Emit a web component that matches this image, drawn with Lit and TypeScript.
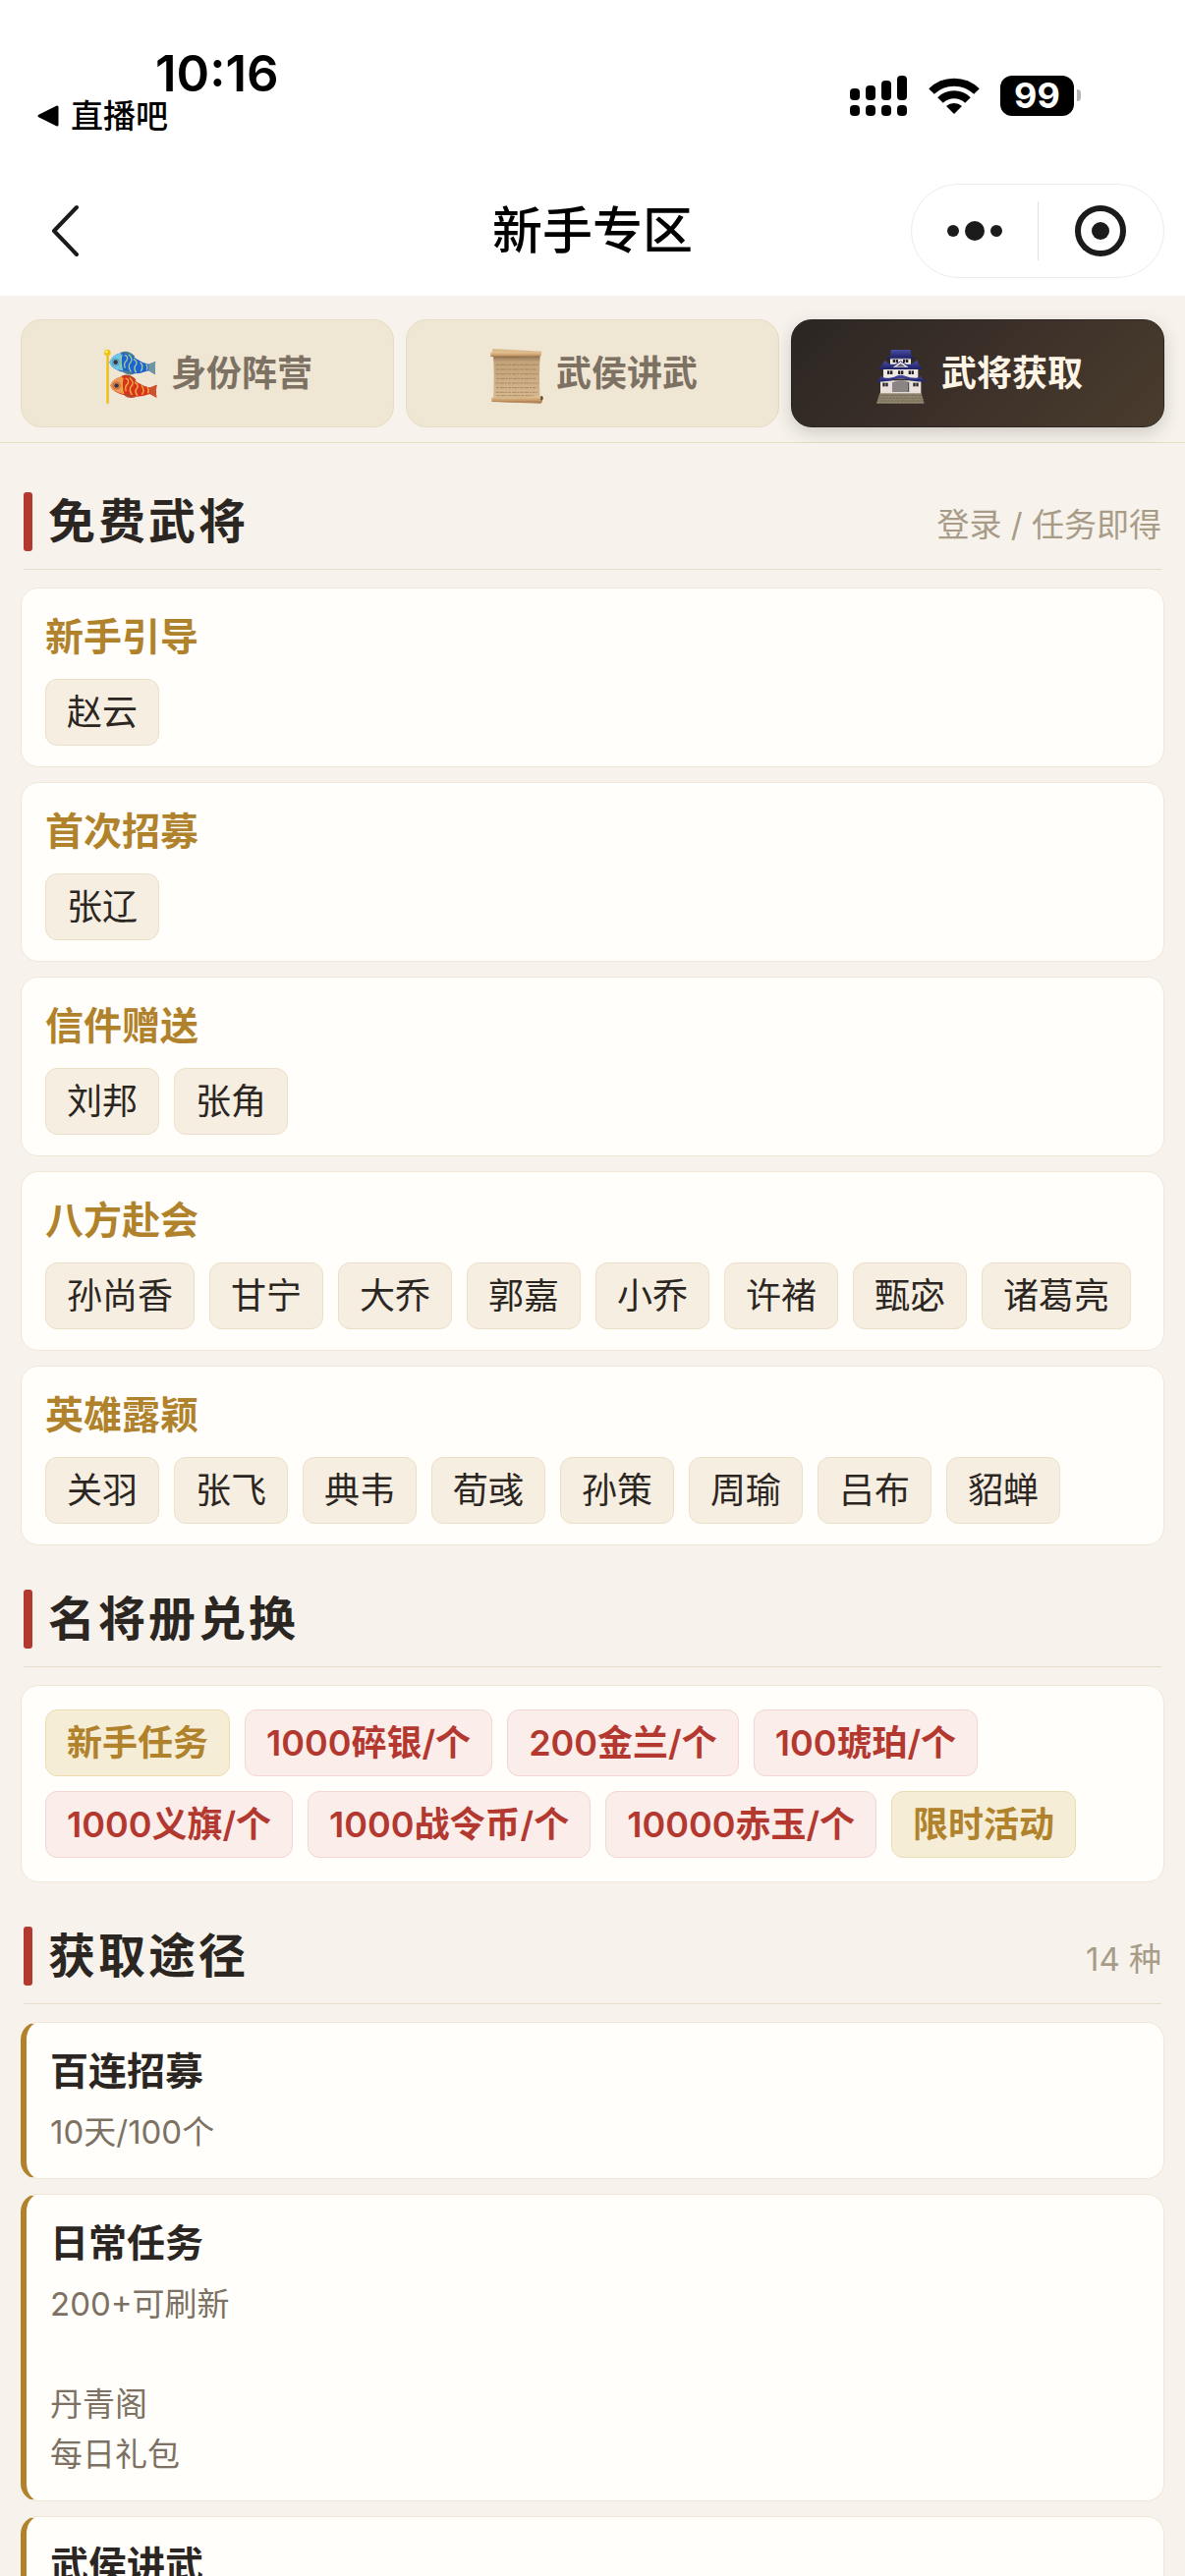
import { LitElement, html, svg, css, nothing } from "lit";
import { customElement, property, state } from "lit/decorators.js";
import { classMap } from "lit/directives/class-map.js";

type TagKind = "plain" | "red" | "gold";
interface Tag { label: string; kind: TagKind }
interface Group { title: string; heroes: string[] }
interface Source { title: string; lines: string[] }

const GROUPS: Group[] = [
  { title: "新手引导", heroes: ["赵云"] },
  { title: "首次招募", heroes: ["张辽"] },
  { title: "信件赠送", heroes: ["刘邦", "张角"] },
  { title: "八方赴会", heroes: ["孙尚香", "甘宁", "大乔", "郭嘉", "小乔", "许褚", "甄宓", "诸葛亮"] },
  { title: "英雄露颖", heroes: ["关羽", "张飞", "典韦", "荀彧", "孙策", "周瑜", "吕布", "貂蝉"] },
];

const EXCHANGES: Tag[] = [
  { label: "新手任务", kind: "gold" },
  { label: "1000碎银/个", kind: "red" },
  { label: "200金兰/个", kind: "red" },
  { label: "100琥珀/个", kind: "red" },
  { label: "1000义旗/个", kind: "red" },
  { label: "1000战令币/个", kind: "red" },
  { label: "10000赤玉/个", kind: "red" },
  { label: "限时活动", kind: "gold" },
];

const SOURCES: Source[] = [
  { title: "百连招募", lines: ["10天/100个"] },
  { title: "日常任务", lines: ["200+可刷新", "", "丹青阁", "每日礼包"] },
  { title: "武侯讲武", lines: [] },
];

const fish = (body: string, scale: string, head: string, fin: string, tail: string) => svg`
  <path d="M98 56 Q122 46 142 68 L134 74 L98 62Z" fill=${fin}/>
  <path d="M64 86 Q74 62 100 58 Q124 56 146 76 Q164 88 184 92 L205 84 Q201 98 204 124 L184 112 Q160 122 132 121 Q88 116 70 98Z" fill=${body}/>
  <path d="M64 86 Q74 62 100 58 Q96 84 102 112 Q82 108 70 98Z" fill=${head}/>
  <path d="M184 92 L205 84 Q201 98 204 124 L184 112Z" fill=${tail}/>
  <g fill="none" stroke=${scale} stroke-width="4">
    <path d="M102 62 Q96 86 104 112"/>
    <path d="M110 64 Q124 68 116 82 Q106 90 112 104"/>
    <path d="M122 62 Q140 76 126 90 Q120 100 130 116"/>
    <path d="M138 76 Q154 86 142 98 Q138 108 146 118"/>
    <path d="M158 86 Q170 98 160 114"/>
    <path d="M176 92 Q182 100 178 110"/>
  </g>
  <circle cx="83" cy="86" r="11" fill=${head} stroke=${fin} stroke-width="2"/>
  <circle cx="83" cy="86" r="7" fill="#3b3440"/>
  <path d="M108 112 Q122 110 140 122 Q122 128 108 118Z" fill=${fin}/>`;

const iconKoi = html`<svg class="emoji" viewBox="42 24 180 192" aria-hidden="true">
  <rect x="54" y="56" width="8" height="156" rx="3" fill="#e3b011"/>
  <rect x="55" y="60" width="3" height="150" fill="#fbe04e"/>
  <circle cx="58" cy="57" r="10" fill="#f0c411"/>
  <circle cx="55" cy="54" r="4" fill="#fff07a"/>
  ${fish("#1f62d3", "#9fcf8a", "#6cc7e6", "#4b7f8c", "#7395a0")}
  <g transform="translate(2 73) scale(1.01 .98)">${fish("#d8331c", "#f2b23c", "#ec9a55", "#b4442a", "#cf5230")}</g>
</svg>`;

const iconScroll = html`<svg class="emoji" viewBox="48 24 180 192" aria-hidden="true">
  <defs>
    <linearGradient id="paper" x1="0" y1="0" x2="0" y2="1">
      <stop offset="0" stop-color="#8d7150"/><stop offset=".14" stop-color="#c3a37a"/>
      <stop offset=".6" stop-color="#cfae87"/><stop offset="1" stop-color="#d8ba90"/>
    </linearGradient>
    <linearGradient id="roll" x1="0" y1="0" x2="0" y2="1">
      <stop offset="0" stop-color="#e7c596"/><stop offset=".6" stop-color="#c99c6b"/><stop offset="1" stop-color="#8a6340"/>
    </linearGradient>
  </defs>
  <path d="M66 66 H209 Q205 130 209 200 H66 Q70 130 66 66Z" fill="url(#paper)"/>
  <path d="M64 45 L214 53 L212 62 L62 58Z" fill="#dcb98a"/>
  <path d="M58 55 L212 58 V67 Q130 74 58 69Z" fill="url(#roll)"/>
  <g stroke="#8f7350" stroke-width="2" stroke-dasharray="9 3 14 2 6 3" fill="none">
    <path d="M74 94 H202"/><path d="M76 108 H200"/><path d="M74 122 H202"/><path d="M76 136 H198"/>
    <path d="M74 150 H202"/><path d="M75 164 H200"/><path d="M74 178 H202"/><path d="M76 188 H190"/>
  </g>
  <path d="M60 194 Q130 200 214 190 L216 206 L212 211 L62 206Z" fill="url(#roll)"/>
  <path d="M62 204 L212 208 V212 L62 207Z" fill="#b98a5c"/>
  <ellipse cx="214" cy="196" rx="4" ry="7" fill="#6e4c30"/>
</svg>`;

const iconCastle = html`<svg class="emoji" viewBox="24 24 180 192" aria-hidden="true">
  <defs>
    <linearGradient id="roof" x1="0" y1="0" x2="0" y2="1">
      <stop offset="0" stop-color="#4a4fa6"/><stop offset="1" stop-color="#1d1f66"/>
    </linearGradient>
  </defs>
  <path d="M46 180 H173 L182 212 H36Z" fill="#8b8069"/>
  <g stroke="#665d4c" stroke-width="2" stroke-dasharray="6 4 9 3" fill="none">
    <path d="M46 188 H176"/><path d="M43 196 H178"/><path d="M40 204 H180"/>
  </g>
  <g stroke="#aea288" stroke-width="2" stroke-dasharray="4 7" fill="none">
    <path d="M48 192 H176"/><path d="M43 200 H178"/><path d="M40 209 H180"/>
  </g>
  <rect x="48" y="142" width="124" height="39" fill="#e9e0da"/>
  <rect x="57" y="106" width="106" height="30" fill="#efe8e3"/>
  <rect x="78" y="72" width="63" height="24" fill="#f1ebe6"/>
  <path d="M80 48 H140 L142 66 Q148 71 151 74 H67 Q75 70 78 66Z" fill="url(#roof)"/>
  <path d="M67 74 H151 V76 H67Z" fill="#171a4e"/>
  <path d="M60 80 L77 92 H142 L160 80 Q164 96 179 107 Q172 109 168 108 H52 Q46 109 41 106 Q56 96 60 80Z" fill="url(#roof)"/>
  <path d="M110 84 L134 101 H86Z" fill="#efe8e3"/>
  <path d="M110 90 L124 100 H96Z" fill="#6a6580"/>
  <path d="M84 100 L110 83 L136 100" stroke="#2b2e78" stroke-width="3" fill="none"/>
  <path d="M50 128 Q56 134 66 134 Q86 134 96 128 Q110 122 124 128 Q136 134 156 134 Q164 134 171 128 Q176 140 190 144 Q180 147 160 145 Q140 144 126 138 Q110 132 94 138 Q80 144 60 145 Q42 147 32 144 Q46 140 50 128Z" fill="url(#roof)"/>
  <g fill="#26232b">
    <rect x="86" y="78" width="7" height="9"/><rect x="95" y="78" width="7" height="9"/>
    <rect x="117" y="78" width="7" height="9"/><rect x="126" y="78" width="7" height="9"/>
    <rect x="69" y="112" width="7" height="11"/><rect x="78" y="112" width="7" height="11"/>
    <rect x="102" y="112" width="7" height="11"/><rect x="111" y="112" width="7" height="11"/>
    <rect x="134" y="112" width="7" height="11"/><rect x="143" y="112" width="7" height="11"/>
    <rect x="55" y="149" width="7" height="11"/><rect x="64" y="149" width="7" height="11"/>
    <rect x="148" y="149" width="7" height="11"/><rect x="157" y="149" width="7" height="11"/>
  </g>
  <path d="M84 178 V148 Q110 138 136 148 V178Z" fill="#d9d0ca"/>
  <path d="M87 177 V147 M93 177 V145 M99 177 V144 M105 177 V143 M111 177 V143 M117 177 V143 M123 177 V144 M129 177 V145 M134 177 V147" stroke="#3d3840" stroke-width="3"/>
</svg>`;

const TABS = [
  { label: "身份阵营", icon: iconKoi },
  { label: "武侯讲武", icon: iconScroll },
  { label: "武将获取", icon: iconCastle },
];

@customElement("status-bar")
class StatusBar extends LitElement {
  static styles = css`
    :host { display: flex; justify-content: space-between; align-items: flex-start; height: 169px; color: #000; }
    .left { display: flex; flex-direction: column; align-items: flex-start; padding: 50px 0 0 36px; }
    .time { padding-left: 122px; font-size: 51px; line-height: 50px; font-weight: 600; }
    .return { display: flex; align-items: center; gap: 12px; font-size: 33px; line-height: 36px; font-weight: 500; color: inherit; text-decoration: none; }
    .right { display: flex; align-items: center; padding: 76px 106px 0 0; }
    .signal { width: 58px; height: 42px; margin-right: 22px; }
    .wifi { width: 52px; height: 40px; margin-right: 21px; }
    .battery { display: flex; align-items: center; justify-content: center; width: 75px; height: 41px; border-radius: 12px; background: #000; color: #fff; font-size: 36px; line-height: 41px; font-weight: 700; }
    .nub { width: 4px; height: 12px; margin-left: 3px; border-radius: 0 4px 4px 0; background: #b4b4b4; }
  `;
  render() {
    return html`
      <div class="left">
        <span class="time">10:16</span>
        <a class="return" href="#return">
          <svg width="24" height="24" viewBox="0 0 24 24" aria-hidden="true"><path d="M4 12 22 3V21Z" fill="#000" stroke="#000" stroke-width="3" stroke-linejoin="round"/></svg>
          直播吧
        </a>
      </div>
      <div class="right">
        <svg class="signal" viewBox="0 0 58 42" aria-hidden="true">
          <rect x="0" y="14" width="10" height="12" rx="4"/><rect x="16" y="11" width="10" height="15" rx="4"/>
          <rect x="32" y="6" width="10" height="20" rx="4"/><rect x="48" y="1" width="10" height="25" rx="4"/>
          <rect x="0" y="31" width="10" height="11" rx="4"/><rect x="16" y="31" width="10" height="11" rx="4"/>
          <rect x="32" y="31" width="10" height="11" rx="4"/><rect x="48" y="31" width="10" height="11" rx="4"/>
        </svg>
        <svg class="wifi" viewBox="0 0 52 40" aria-hidden="true">
          <g fill="none" stroke="#000" stroke-width="8"><path d="M3 16A33 33 0 0 1 49 16"/><path d="M12 25A20 20 0 0 1 40 25"/></g>
          <path d="M18 31A12 12 0 0 1 34 31L26 39Z"/>
        </svg>
        <span class="battery">99</span><span class="nub"></span>
      </div>`;
  }
}

@customElement("nav-bar")
class NavBar extends LitElement {
  @property() heading = "";
  static styles = css`
    :host { display: grid; grid-template-columns: 1fr auto 1fr; align-items: center; height: 132px; padding: 0 21px; }
    button { display: flex; align-items: center; justify-content: center; margin: 0; padding: 0; border: 0; background: none; cursor: pointer; }
    .back { width: 90px; height: 90px; }
    .title { margin: 0; font-size: 51px; line-height: 72px; font-weight: 500; color: #000; }
    .capsule { justify-self: end; display: flex; align-items: center; box-sizing: border-box; width: 258px; height: 96px; border: 1px solid #ebebeb; border-radius: 48px; }
    .capsule button { flex: 1; height: 94px; }
    .divider { width: 1px; height: 60px; background: #e2e2e2; }
  `;
  render() {
    return html`
      <button class="back" aria-label="返回">
        <svg width="90" height="90" viewBox="0 0 90 90" aria-hidden="true"><path d="M57 21 34 45 57 69" fill="none" stroke="#1b1b1b" stroke-width="4" stroke-linecap="round" stroke-linejoin="round"/></svg>
      </button>
      <h1 class="title">${this.heading}</h1>
      <div class="capsule">
        <button aria-label="更多"><svg width="60" height="24" viewBox="0 0 60 24" fill="#1b1b1b" aria-hidden="true"><circle cx="8" cy="12" r="6"/><circle cx="30" cy="12" r="10"/><circle cx="52" cy="12" r="6"/></svg></button>
        <span class="divider"></span>
        <button aria-label="关闭"><svg width="54" height="54" viewBox="0 0 54 54" aria-hidden="true"><circle cx="27" cy="27" r="23" fill="none" stroke="#1b1b1b" stroke-width="6"/><circle cx="27" cy="27" r="9" fill="#1b1b1b"/></svg></button>
      </div>`;
  }
}

@customElement("section-head")
class SectionHead extends LitElement {
  @property() heading = "";
  @property() note = "";
  static styles = css`
    :host { display: flex; justify-content: space-between; align-items: center; margin: 0 3px 18px; padding-bottom: 18px; border-bottom: 1px solid #e8ddcd; }
    .title { display: flex; align-items: center; gap: 16px; margin: 0; font-size: 48px; line-height: 60px; font-weight: 700; letter-spacing: 3px; color: #2b2622; }
    .title::before { content: ""; width: 9px; height: 60px; border-radius: 3px; background: #b3382f; }
    .note { padding-top: 6px; font-size: 33px; line-height: 48px; color: #a89c88; }
  `;
  render() {
    return html`<h2 class="title">${this.heading}</h2>
      ${this.note ? html`<span class="note">${this.note}</span>` : nothing}`;
  }
}

@customElement("tag-list")
class TagList extends LitElement {
  @property({ attribute: false }) tags: Tag[] = [];
  static styles = css`
    :host { display: block; }
    .tags { display: flex; flex-wrap: wrap; gap: 15px; margin: 0; padding: 0; list-style: none; }
    .tag { padding: 6px 21px; border: 1px solid #ecdfc8; border-radius: 12px; background: #f6eee1; color: #2b2622; font-size: 36px; line-height: 54px; }
    .red { border-color: #f3d5d1; background: #fbede9; color: #b3382f; font-weight: 600; }
    .gold { border-color: #ecdcb2; background: #f6edd7; color: #b0822c; font-weight: 600; }
  `;
  render() {
    return html`<ul class="tags">${this.tags.map(t => html`<li class="tag ${t.kind}">${t.label}</li>`)}</ul>`;
  }
}

@customElement("app-root")
class AppRoot extends LitElement {
  @state() private active = 2;

  static styles = css`
    :host { display: flex; flex-direction: column; height: 100vh; overflow: hidden; background: #fff; font-family: Inter, "Noto Sans CJK SC", sans-serif; }
    status-bar, nav-bar { flex: none; }
    .tabs { flex: none; display: flex; gap: 12px; padding: 24px 21px 15px; border-bottom: 1px solid #e8dcc4; background: #f7f3ec; }
    .tab { flex: 1; display: flex; align-items: center; justify-content: center; gap: 10px; height: 110px; margin: 0; padding: 0; border: 1px solid #e8dcc4; border-radius: 21px; background: #efe6d3; color: #7c7163; font: inherit; font-size: 36px; line-height: 48px; font-weight: 600; cursor: pointer; }
    .tab.active { border-color: #2b2622; background: linear-gradient(135deg, #2b2622, #3c3029 50%, #4a3d2e); color: #fff5e6; box-shadow: 0 6px 18px rgba(43, 38, 34, 0.2); }
    .emoji { width: 60px; height: 64px; }
    .page { flex: 1; min-height: 0; overflow-y: auto; scrollbar-width: none; padding: 5px 21px 0; background: #f7f3ec; }
    .block { padding-top: 45px; }
    .stack { display: flex; flex-direction: column; gap: 15px; }
    .card { padding: 21px 24px; border: 1px solid #f0e7d8; border-radius: 18px; background: #fffefa; }
    .card.flush { padding: 24px; }
    .card.source { border-left: 6px solid #b0822c; }
    .name { margin: 0; font-size: 39px; line-height: 56px; font-weight: 600; color: #2b2622; }
    .name.gold { margin-bottom: 15px; color: #b0822c; }
    .lines { margin: 9px 0 0; font-size: 33px; line-height: 51px; color: #7c7163; white-space: pre-line; }
  `;

  render() {
    return html`
      <status-bar></status-bar>
      <nav-bar heading="新手专区"></nav-bar>
      <div class="tabs" role="tablist">
        ${TABS.map((t, i) => html`
          <button class=${classMap({ tab: true, active: i === this.active })} role="tab"
            aria-selected=${i === this.active ? "true" : "false"} @click=${() => { this.active = i; }}>
            ${t.icon}<span>${t.label}</span>
          </button>`)}
      </div>
      <main class="page">
        <section class="block">
          <section-head heading="免费武将" note="登录 / 任务即得"></section-head>
          <div class="stack">
            ${GROUPS.map(g => html`
              <article class="card">
                <h3 class="name gold">${g.title}</h3>
                <tag-list .tags=${g.heroes.map(label => ({ label, kind: "plain" as TagKind }))}></tag-list>
              </article>`)}
          </div>
        </section>
        <section class="block">
          <section-head heading="名将册兑换"></section-head>
          <div class="card flush"><tag-list .tags=${EXCHANGES}></tag-list></div>
        </section>
        <section class="block">
          <section-head heading="获取途径" note="14 种"></section-head>
          <div class="stack">
            ${SOURCES.map(s => html`
              <article class="card source">
                <h3 class="name">${s.title}</h3>
                ${s.lines.length ? html`<p class="lines">${s.lines.join("\n")}</p>` : nothing}
              </article>`)}
          </div>
        </section>
      </main>`;
  }
}
